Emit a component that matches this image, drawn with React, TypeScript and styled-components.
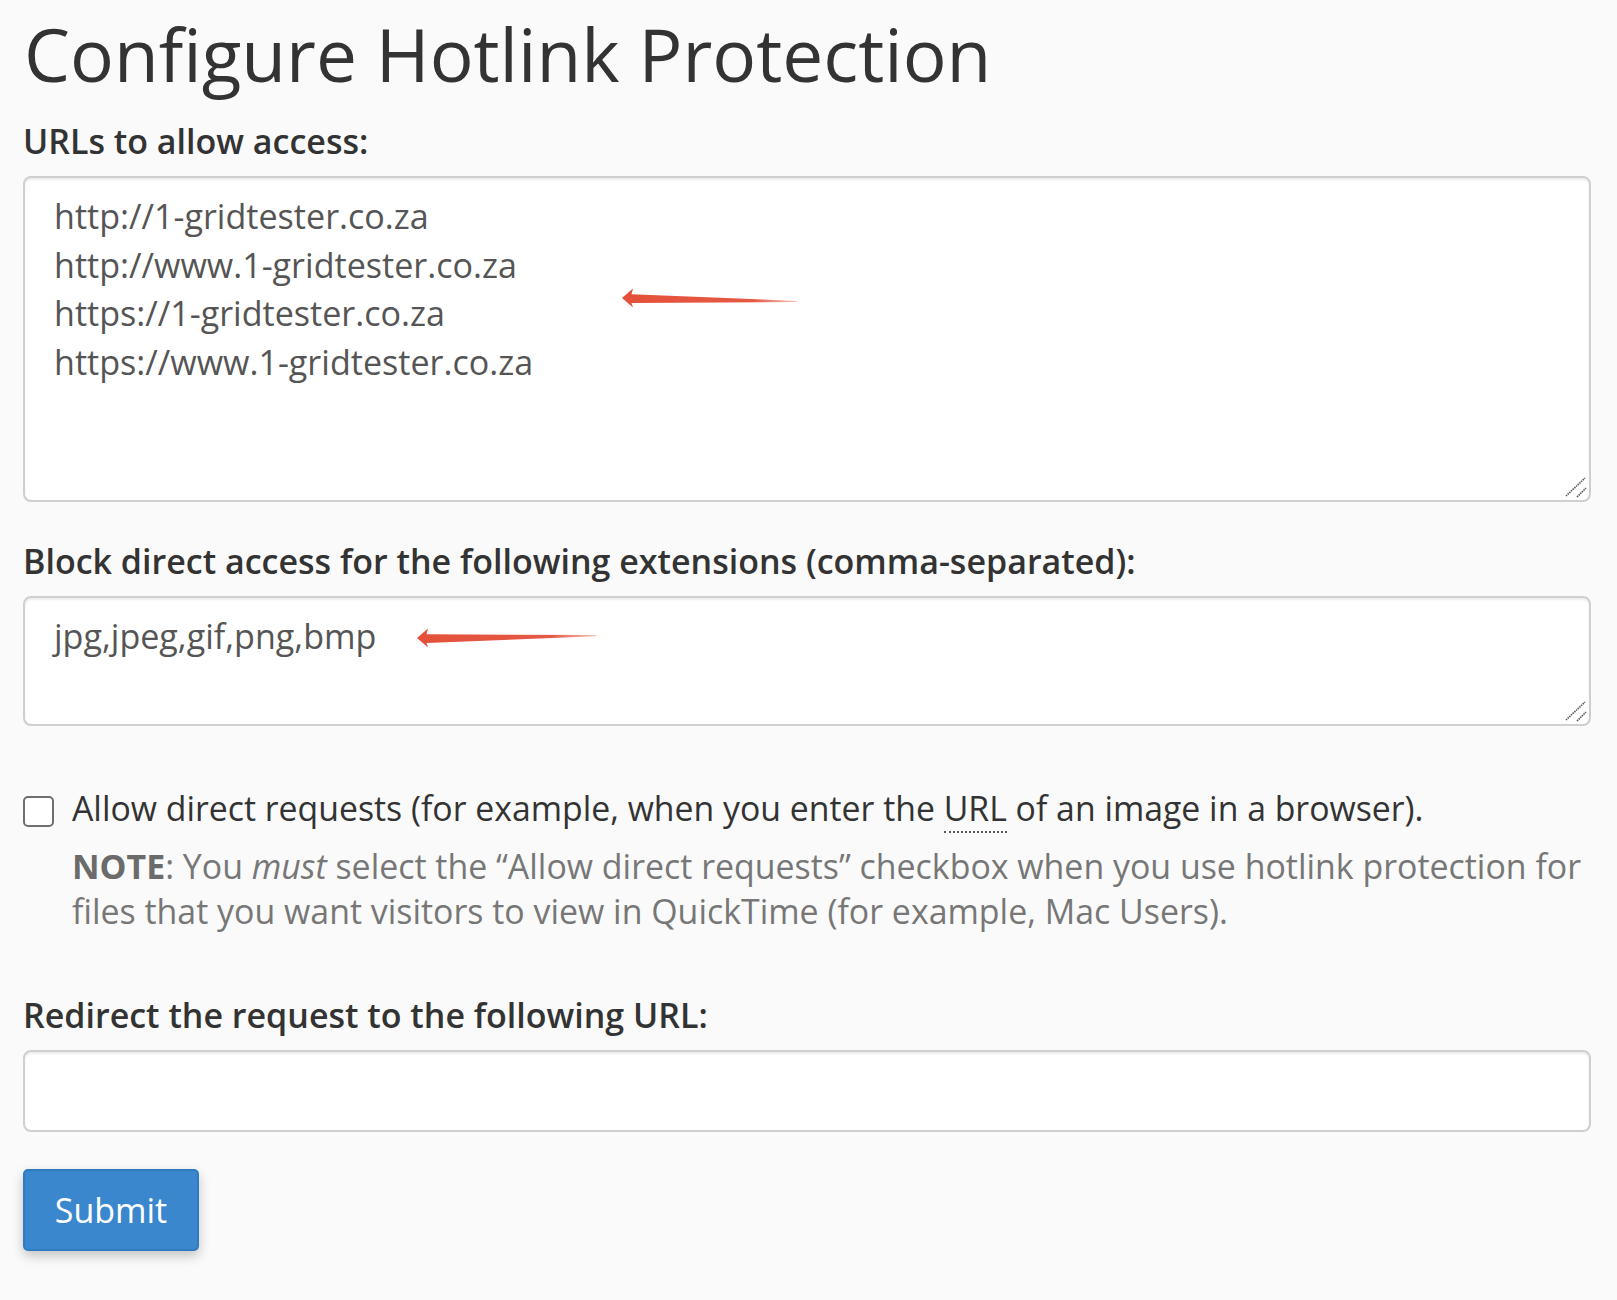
import React from "react";
import styled, { createGlobalStyle } from "styled-components";

const GlobalStyle = createGlobalStyle`
  html, body {
    margin: 0;
    padding: 0;
    background: #fafafa;
  }
  body {
    font-family: "Open Sans", "Noto Sans", "Liberation Sans", sans-serif;
    color: #333;
  }
  * { box-sizing: border-box; }
`;

const Page = styled.div`
  padding: 14px 26px 40px 23px;
  min-height: 1300px;
`;

const Title = styled.h1`
  margin: 0 0 24px 1px;
  font-size: 73px;
  line-height: 79px;
  font-weight: 400;
  color: #333;
`;

const Group = styled.div<{ $mb?: number }>`
  margin-bottom: ${(p) => (p.$mb ?? 35)}px;
`;

const Label = styled.label`
  display: block;
  font-size: 34px;
  line-height: 48px;
  font-weight: 600;
  color: #333;
  margin: 0 0 11px 0;
`;

const FieldWrap = styled.div`
  position: relative;
`;

const TextArea = styled.textarea<{ $h: number }>`
  display: block;
  width: 100%;
  height: ${(p) => p.$h}px;
  padding: 14px 29px;
  border: 2px solid #cfcfcf;
  border-radius: 8px;
  background: #fff;
  box-shadow: inset 0 2px 2px rgba(0, 0, 0, 0.075);
  font-family: "Open Sans", "Noto Sans", sans-serif;
  font-size: 34.1px;
  line-height: 48.5px;
  color: #555;
  resize: none;
  outline: none;
`;

const TextInput = styled.input`
  display: block;
  width: 100%;
  height: 82px;
  padding: 14px 29px;
  border: 2px solid #cfcfcf;
  border-radius: 8px;
  background: #fff;
  box-shadow: inset 0 2px 2px rgba(0, 0, 0, 0.075);
  font-family: "Open Sans", "Noto Sans", sans-serif;
  font-size: 34px;
  color: #555;
  outline: none;
`;

const ArrowSvg = styled.svg`
  position: absolute;
  pointer-events: none;
  overflow: visible;
`;

const Grip = styled.svg`
  position: absolute;
  right: 2px;
  bottom: 2px;
  width: 26px;
  height: 26px;
  pointer-events: none;
`;

const CheckRow = styled.label`
  display: flex;
  align-items: flex-start;
  gap: 18px;
  font-size: 33.8px;
  line-height: 48px;
  color: #333;
`;

const Box = styled.input`
  appearance: none;
  -webkit-appearance: none;
  flex: none;
  width: 31px;
  height: 31px;
  margin: 12px 0 0 0;
  border: 2px solid #6f6f6f;
  border-radius: 5px;
  background: #fff;
`;

const Abbr = styled.abbr`
  text-decoration: none;
  border-bottom: 2px dotted #555;
  cursor: help;
`;

const Note = styled.p`
  margin: 12px 0 0 49px;
  font-size: 33.9px;
  line-height: 44.5px;
  color: #777;
`;

const NoteStrong = styled.strong`
  font-weight: 700;
  color: #6b6b6b;
`;

const SubmitButton = styled.button`
  display: block;
  width: 176px;
  height: 82px;
  padding: 0;
  border: 2px solid #2f7bc0;
  border-radius: 5px;
  background: #3a87cd;
  color: #fff;
  font-family: "Open Sans", "Noto Sans", sans-serif;
  font-size: 34px;
  box-shadow: 0 5px 12px rgba(0, 0, 0, 0.22);
  cursor: pointer;
`;

type ArrowProps = { left: number; top: number; len: number; tailDy: number };

function Arrow({ left, top, len, tailDy }: ArrowProps) {
  const ty = 10 + tailDy;
  const pts = [
    [0, 10],
    [11, 0.5],
    [9.5, 6.3],
    [len, ty - 0.6],
    [len, ty + 0.6],
    [9.5, 15],
    [11, 19.5],
  ]
    .map((p) => p.join(","))
    .join(" ");
  const id = `ag${left}${top}`;
  return (
    <ArrowSvg
      style={{ left, top }}
      width={len}
      height={20}
      viewBox={`0 0 ${len} 20`}
    >
      <defs>
        <linearGradient id={id} x1="0" y1="0" x2="1" y2="0">
          <stop offset="0" stopColor="#e4503a" stopOpacity="1" />
          <stop offset="0.75" stopColor="#e4503a" stopOpacity="0.95" />
          <stop offset="1" stopColor="#e4503a" stopOpacity="0.35" />
        </linearGradient>
      </defs>
      <polygon points={pts} fill={`url(#${id})`} />
    </ArrowSvg>
  );
}

function ResizeGrip() {
  return (
    <Grip viewBox="0 0 26 26">
      <line x1="3" y1="22" x2="22" y2="4" stroke="#555" strokeWidth="1.6" strokeDasharray="1.5 0.8" />
      <line x1="14" y1="23" x2="23" y2="14" stroke="#555" strokeWidth="1.6" strokeDasharray="1.5 0.8" />
    </Grip>
  );
}

const urls = [
  "http://1-gridtester.co.za",
  "http://www.1-gridtester.co.za",
  "https://1-gridtester.co.za",
  "https://www.1-gridtester.co.za",
].join("\n");

export default function App() {
  return (
    <>
      <GlobalStyle />
      <Page>
        <Title>Configure Hotlink Protection</Title>

        <Group>
          <Label htmlFor="urls">URLs to allow access:</Label>
          <FieldWrap>
            <TextArea id="urls" $h={326} defaultValue={urls} />
            <ResizeGrip />
            <Arrow left={599} top={112} len={175} tailDy={3.5} />
          </FieldWrap>
        </Group>

        <Group $mb={58}>
          <Label htmlFor="ext">
            Block direct access for the following extensions (comma-separated):
          </Label>
          <FieldWrap>
            <TextArea id="ext" $h={130} defaultValue="jpg,jpeg,gif,png,bmp" />
            <ResizeGrip />
            <Arrow left={394} top={32} len={179} tailDy={-2.3} />
          </FieldWrap>
        </Group>

        <Group $mb={58}>
          <CheckRow>
            <Box type="checkbox" />
            <span>
              Allow direct requests (for example, when you enter the{" "}
              <Abbr title="Uniform Resource Locator">URL</Abbr> of an image in a
              browser).
            </span>
          </CheckRow>
          <Note>
            <NoteStrong>NOTE</NoteStrong>: You <em>must</em> select the “Allow
            direct requests” checkbox when you use hotlink protection for files
            that you want visitors to view in QuickTime (for example, Mac
            Users).
          </Note>
        </Group>

        <Group $mb={37}>
          <Label htmlFor="redir">Redirect the request to the following URL:</Label>
          <TextInput id="redir" type="text" />
        </Group>

        <SubmitButton type="button">Submit</SubmitButton>
      </Page>
    </>
  );
}
